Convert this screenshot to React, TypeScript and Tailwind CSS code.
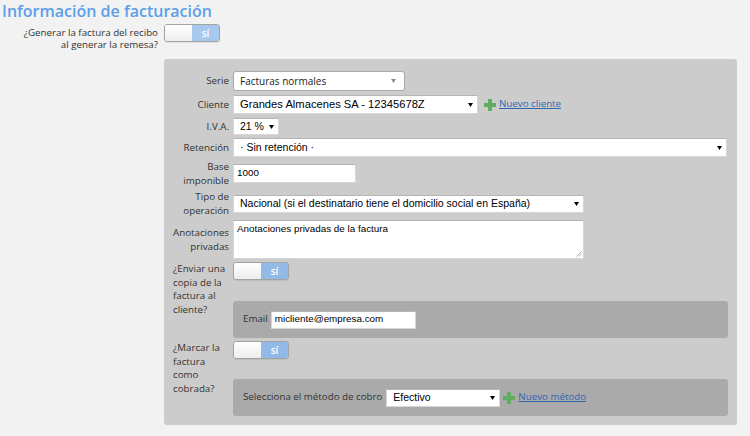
import React from "react";

const OS = "font-['Open_Sans',sans-serif]";
const AR = "font-['Liberation_Sans',Arial,sans-serif]";

function Arrow({ color = "#000" }: { color?: string }) {
  return (
    <svg width="5" height="4" viewBox="0 0 5 4" className="shrink-0">
      <polygon points="0,0 5,0 2.5,4" fill={color} />
    </svg>
  );
}

function Plus() {
  return (
    <svg width="12" height="12" viewBox="0 0 12 12" className="shrink-0">
      <path d="M4 0h4v4h4v4H8v4H4V8H0V4h4z" fill="#5fae5f" />
    </svg>
  );
}

function Toggle({ blue }: { blue: string }) {
  return (
    <div className="flex h-[18px] w-[56px] shrink-0 overflow-hidden rounded-[3px] border border-[#a3a3a3] shadow-[0_1px_1px_rgba(0,0,0,0.08)]">
      <div className="flex-1 bg-gradient-to-b from-white to-[#ededed]" />
      <div className={`flex flex-1 items-center justify-center text-[10px] font-semibold text-white ${OS} ${blue}`}>
        sí
      </div>
    </div>
  );
}

function Sel({
  w,
  h,
  text,
  size,
}: {
  w: string;
  h: string;
  text: string;
  size: string;
}) {
  return (
    <div
      className={`flex ${w} ${h} shrink-0 items-center justify-between border border-[#d6d6d6] border-t-[#b4b4b4] bg-white pl-[6px] pr-[4px] ${AR} ${size} text-black`}
    >
      <span className="truncate whitespace-nowrap">{text}</span>
      <Arrow />
    </div>
  );
}

function Label({
  children,
  left,
}: {
  children: React.ReactNode;
  left?: boolean;
}) {
  return (
    <div
      className={`mr-[4px] w-[56px] shrink-0 ${left ? "text-left" : "text-right"} ${OS} text-[9.75px] leading-[13.5px] text-[#333]`}
    >
      {children}
    </div>
  );
}

export default function App() {
  return (
    <div className={`min-h-[436px] w-full bg-[#f2f2f2] ${OS}`}>
      <div className="pl-[2px] pt-[2px] text-[16px] font-semibold leading-[18px] text-[#5c9fe8]">
        Información de facturación
      </div>

      <div className="mt-[4px] flex h-[35px] items-start">
        <div className="mt-[2.5px] w-[158px] text-right text-[9.75px] leading-[12.5px] text-[#333]">
          ¿Generar la factura del recibo
          <br />
          al generar la remesa?
        </div>
        <div className="ml-[6px]">
          <Toggle blue="bg-[#a7c8ef]" />
        </div>
      </div>

      <div className="ml-[164px] w-[573px] rounded-[3px] bg-[#cccccc] pb-[9px] pl-[9px] pr-[9px] pt-[12px]">
        {/* Serie */}
        <div className="flex items-center">
          <Label>Serie</Label>
          <div className="flex h-[20px] w-[172px] items-center justify-between rounded-[3px] border border-[#a9a9a9] bg-white pl-[6px] pr-[8px] text-[10px] text-[#222]">
            <span>Facturas normales</span>
            <Arrow color="#8a8a8a" />
          </div>
        </div>

        {/* Cliente */}
        <div className="mt-[4px] flex items-center">
          <Label>Cliente</Label>
          <Sel w="w-[245px]" h="h-[19px]" size="text-[11.2px]" text="Grandes Almacenes SA - 12345678Z" />
          <div className="ml-[6px] flex items-center gap-[3px]">
            <Plus />
            <span className="text-[9.75px] text-[#2f68b0] underline">Nuevo cliente</span>
          </div>
        </div>

        {/* IVA */}
        <div className="mt-[4px] flex items-center">
          <Label>I.V.A.</Label>
          <Sel w="w-[46px]" h="h-[17px]" size="text-[10.5px]" text="21 %" />
        </div>

        {/* Retención */}
        <div className="mt-[3px] flex items-center">
          <Label>Retención</Label>
          <Sel w="w-[494px]" h="h-[19px]" size="text-[10.5px]" text="· Sin retención ·" />
        </div>

        {/* Base imponible */}
        <div className="mt-[3px] flex items-center">
          <Label>
            Base
            <br />
            imponible
          </Label>
          <div
            className={`flex h-[19px] w-[123px] items-center border border-[#d6d6d6] border-t-[#b4b4b4] bg-white pl-[3px] ${AR} text-[9.85px] text-black`}
          >
            1000
          </div>
        </div>

        {/* Tipo de operación */}
        <div className="mt-[3px] flex items-center">
          <Label>
            Tipo de
            <br />
            operación
          </Label>
          <Sel
            w="w-[351px]"
            h="h-[18px]"
            size="text-[10.5px]"
            text="Nacional (si el destinatario tiene el domicilio social en España)"
          />
        </div>

        {/* Anotaciones */}
        <div className="mt-[3px] flex items-center">
          <Label>
            Anotaciones
            <br />
            privadas
          </Label>
          <div
            className={`relative h-[39px] w-[351px] border border-[#d6d6d6] border-t-[#b4b4b4] bg-white pl-[3px] pt-[2px] ${AR} text-[9.85px] leading-[12px] text-black`}
          >
            Anotaciones privadas de la factura
            <svg width="6" height="6" viewBox="0 0 6 6" className="absolute bottom-[1px] right-[1px]">
              <path d="M0.5 5.5L5.5 0.5M3 5.5L5.5 3" stroke="#999" strokeWidth="0.8" />
            </svg>
          </div>
        </div>

        {/* Enviar copia */}
        <div className="mt-[3px] flex items-start">
          <Label left>
            ¿Enviar una
            <br />
            copia de la
            <br />
            factura al
            <br />
            cliente?
          </Label>
          <div className="flex flex-1 flex-col items-start">
            <Toggle blue="bg-[#93b9e7]" />
            <div className="mt-[21px] flex h-[37px] w-full items-center rounded-[3px] bg-[#aaaaaa] pl-[10px]">
              <span className="text-[9.75px] text-[#333]">Email</span>
              <div
                className={`ml-[3px] flex h-[18px] w-[145px] items-center border border-[#d6d6d6] border-t-[#b4b4b4] bg-white pl-[3px] ${AR} text-[9.85px] text-black`}
              >
                micliente@empresa.com
              </div>
            </div>
          </div>
        </div>

        {/* Marcar cobrada */}
        <div className="mt-[3px] flex items-start">
          <Label left>
            ¿Marcar la
            <br />
            factura
            <br />
            como
            <br />
            cobrada?
          </Label>
          <div className="flex flex-1 flex-col items-start">
            <Toggle blue="bg-[#93b9e7]" />
            <div className="mt-[20px] flex h-[37px] w-full items-center rounded-[3px] bg-[#aaaaaa] pl-[10px]">
              <span className="text-[9.75px] text-[#333]">Selecciona el método de cobro</span>
              <div className="ml-[4px]">
                <Sel w="w-[114px]" h="h-[18px]" size="text-[10.5px]" text="Efectivo" />
              </div>
              <div className="ml-[3px] flex items-center gap-[3px]">
                <Plus />
                <span className="text-[9.75px] text-[#2f68b0] underline">Nuevo método</span>
              </div>
            </div>
          </div>
        </div>
      </div>
    </div>
  );
}
